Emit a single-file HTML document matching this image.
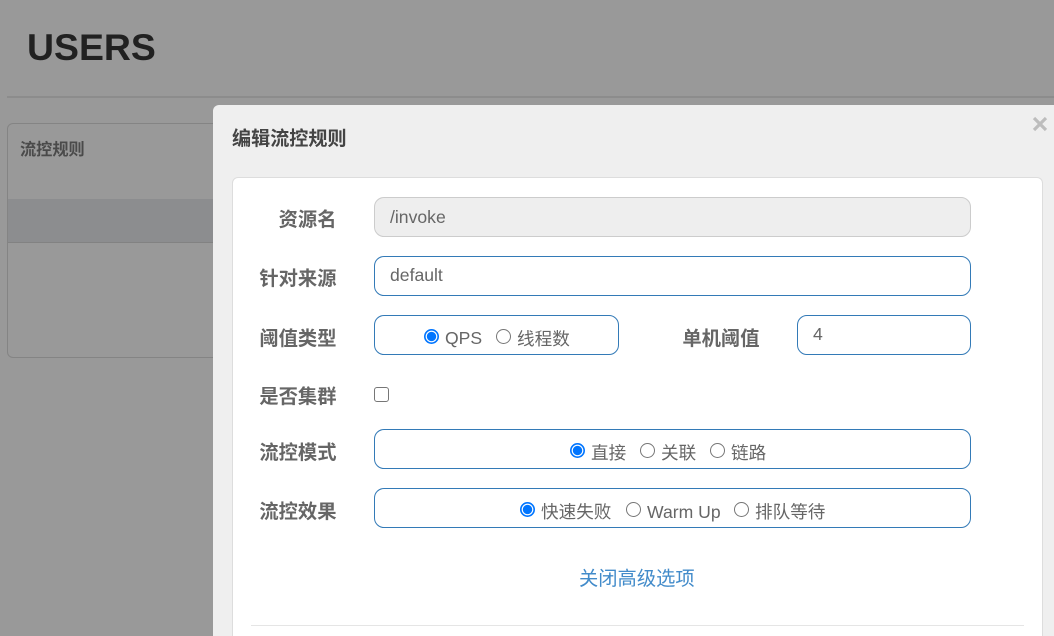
<!DOCTYPE html>
<html><head><meta charset="utf-8"><style>
*{box-sizing:border-box}
html,body{margin:0;padding:0;width:1054px;height:636px;overflow:hidden;background:#999;font-family:"Liberation Sans","Noto Sans CJK SC",sans-serif}
#p{position:relative;width:1054px;height:636px;overflow:hidden;background:#999}
#p div{position:absolute;white-space:nowrap}
.l{font-size:19.3px;font-weight:700;color:#666;right:717.5px;line-height:24px}
.b{border:1px solid #337ab7;border-radius:10px;height:40px;background:#fff}
.t{font-size:17.6px;color:#666;line-height:24px}
.r{width:15px;height:15px;border-radius:50%;border:1px solid #767676;background:#fff}
.c{width:15px;height:15px;border-radius:50%;background:radial-gradient(circle,#0075ff 0 4.4px,#fff 4.9px 5.6px,#0075ff 6.1px)}
</style></head><body><div id="p">
<div style="left:27px;top:25px;font-size:37.4px;font-weight:700;color:#212121;line-height:44px">USERS</div>
<div style="left:7px;top:96px;width:1047px;height:2px;background:#8c8c8c"></div>
<div style="left:7px;top:123px;width:300px;height:235px;border:1px solid #848484;border-radius:6px"></div>
<div style="left:8px;top:199px;width:250px;height:44px;background:#8c8d8f;border-bottom:1px solid #828282"></div>
<div style="left:20px;top:138px;font-size:16.2px;font-weight:700;color:#4a4a4a;line-height:24px">流控规则</div>

<div style="left:213px;top:105px;width:841px;height:531px;background:#efefef;border-radius:6px 0 0 0"></div>
<div style="left:232px;top:128px;font-size:19.1px;font-weight:700;color:#444;line-height:24px">编辑流控规则</div>
<svg style="position:absolute;left:1032px;top:116px" width="16" height="16" viewBox="0 0 16 16"><path d="M2 2L14 14M14 2L2 14" stroke="#bdbdbd" stroke-width="3.2" fill="none"/></svg>
<div style="left:232px;top:177px;width:811px;height:459px;background:#fff;border:1px solid #ddd;border-bottom:0;border-radius:6px 6px 0 0"></div>

<div class="l" style="top:209px">资源名</div>
<div class="l" style="top:268px">针对来源</div>
<div class="l" style="top:328px">阈值类型</div>
<div class="l" style="top:386px">是否集群</div>
<div class="l" style="top:442px">流控模式</div>
<div class="l" style="top:501px">流控效果</div>
<div class="l" style="top:328px;right:294.5px">单机阈值</div>

<div class="b" style="left:374px;top:197px;width:597px;background:#eee;border-color:#ccc"></div>
<div class="t" style="left:390px;top:205px">/invoke</div>
<div class="b" style="left:374px;top:256px;width:597px"></div>
<div class="t" style="left:390px;top:263px">default</div>
<div class="b" style="left:374px;top:315px;width:245px"></div>
<div class="c" style="left:424px;top:329px"></div>
<div class="t" style="left:445px;top:326px">QPS</div>
<div class="r" style="left:496px;top:329px"></div>
<div class="t" style="left:517px;top:327px">线程数</div>
<div class="b" style="left:797px;top:315px;width:174px"></div>
<div class="t" style="left:813px;top:322px">4</div>

<div style="left:374px;top:387px;width:15px;height:15px;border:1px solid #767676;border-radius:3px;background:#fff"></div>

<div class="b" style="left:374px;top:429px;width:597px"></div>
<div class="c" style="left:570px;top:443px"></div>
<div class="t" style="left:591px;top:441px">直接</div>
<div class="r" style="left:640px;top:443px"></div>
<div class="t" style="left:661px;top:441px">关联</div>
<div class="r" style="left:710px;top:443px"></div>
<div class="t" style="left:731px;top:441px">链路</div>

<div class="b" style="left:374px;top:488px;width:597px"></div>
<div class="c" style="left:520px;top:502px"></div>
<div class="t" style="left:541px;top:500px">快速失败</div>
<div class="r" style="left:626px;top:502px"></div>
<div class="t" style="left:647px;top:500px">Warm Up</div>
<div class="r" style="left:734px;top:502px"></div>
<div class="t" style="left:755px;top:500px">排队等待</div>

<div style="left:579px;top:567px;font-size:19.3px;color:#428bca;line-height:26px">关闭高级选项</div>
<div style="left:251px;top:625px;width:773px;height:1px;background:#e5e5e5"></div>
</div></body></html>
